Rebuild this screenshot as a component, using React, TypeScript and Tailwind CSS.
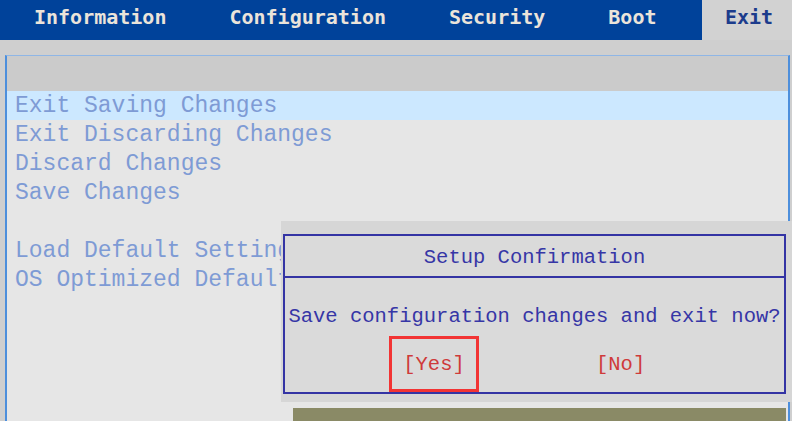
const tabs = ["Information", "Configuration", "Security", "Boot"];

const items = [
  "Exit Saving Changes",
  "Exit Discarding Changes",
  "Discard Changes",
  "Save Changes",
  "",
  "Load Default Settings",
  "OS Optimized Defaults",
];

export default function App() {
  return (
    <div className="relative w-[792px] h-[421px] overflow-hidden bg-[#cfcfcf]">
      {/* top menu bar */}
      <div className="flex h-[40px] font-['DejaVu_Sans_Mono',monospace] text-[20px] font-bold">
        <div className="flex w-[702px] items-center gap-[63px] bg-[#00429a] pl-[34px] text-[#ebe4da]">
          {tabs.map((t) => (
            <span key={t} className="leading-none -mt-[7px]">
              {t}
            </span>
          ))}
        </div>
        <div className="flex flex-1 items-center bg-[#d2d2d2] pl-[23px] text-[#1c3c8c]">
          <span className="leading-none -mt-[7px]">Exit</span>
        </div>
      </div>

      {/* main panel */}
      <div className="ml-[5px] mt-[15px] mr-[2px] h-[366px] border-l-2 border-r-2 border-t border-l-[#4d8fdc] border-r-[#4d8fdc] border-t-[#8fb6e6] bg-[#e6e6e6]">
        <div className="h-[35px] bg-[#cbcbcb]" />
        <div className="font-['Liberation_Mono',monospace] text-[23px] leading-[29px] text-[#7e9bd5]">
          {items.map((item, i) => (
            <div
              key={i}
              className={
                i === 0
                  ? "h-[29px] bg-[#cce8ff] pl-[8px] pt-[2px] whitespace-pre leading-[27px]"
                  : "h-[29px] pl-[8px] pt-[2px] whitespace-pre leading-[27px]"
              }
            >
              {item}
            </div>
          ))}
        </div>
      </div>

      {/* confirmation dialog */}
      <div className="absolute left-[281px] top-[221px] w-[511px] h-[181px] bg-[#d6d6d6] pt-[13px] pl-[2px] pr-[6px]">
        <div className="h-[160px] border-2 border-[#3434a4] bg-[#dadada] font-['Liberation_Mono',monospace] text-[20.5px]">
          <div className="flex h-[42px] items-center justify-center border-b-2 border-[#3434a4] pt-[4px] text-[#3636a6]">
            Setup Confirmation
          </div>
          <div className="pt-[25px] text-center leading-[28px] text-[#3636a6] whitespace-pre">
            Save configuration changes and exit now?
          </div>
          <div className="mt-[5px] flex items-center pl-[104px]">
            <div className="flex h-[56px] w-[90px] items-center justify-center border-[3px] border-[#f23434] pt-[2px] text-[#cf3a3a]">
              [Yes]
            </div>
            <span className="ml-[117px] pt-[2px] text-[#cf3a3a]">[No]</span>
          </div>
        </div>
      </div>

      <div className="absolute left-[293px] top-[408px] w-[493px] h-[13px] bg-[#8a8a66]" />
    </div>
  );
}
